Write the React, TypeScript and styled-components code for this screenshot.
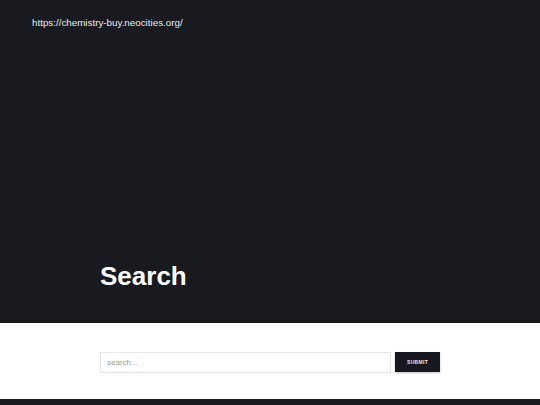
import React from 'react'
import styled, { createGlobalStyle } from 'styled-components'

const GlobalStyle = createGlobalStyle`
  html, body {
    margin: 0;
    padding: 0;
    background: #ffffff;
    font-family: 'Liberation Sans', Arial, sans-serif;
  }
`

const Hero = styled.header`
  height: 323px;
  background-color: #191920;
  display: flex;
  flex-direction: column;
  justify-content: space-between;
  box-sizing: border-box;
  padding: 17px 0 32px;
`

const SiteUrl = styled.div`
  padding-left: 32px;
  color: #ececec;
  font-size: 9.8px;
  line-height: 12px;
`

const Container = styled.div`
  width: 340px;
  margin: 0 auto;
`

const Title = styled.h1`
  margin: 0;
  color: #ffffff;
  font-size: 26px;
  font-weight: 700;
  line-height: 30px;
`

const SearchSection = styled.section`
  height: 76px;
  box-sizing: border-box;
  padding-top: 29px;
  background: #ffffff;
`

const SearchForm = styled.form`
  display: flex;
  gap: 4px;
  margin: 0;
`

const SearchInput = styled.input`
  flex: 1;
  height: 21px;
  box-sizing: border-box;
  border: 1px solid #e6e6e6;
  padding: 0 6px;
  font-family: 'Liberation Sans', Arial, sans-serif;
  font-size: 8px;
  color: #333;
  outline: none;
  &::placeholder {
    color: #9a9a9a;
  }
`

const SubmitButton = styled.button`
  width: 45px;
  height: 20px;
  border: none;
  background: #17171f;
  color: #e8e8e8;
  font-family: 'Liberation Sans', Arial, sans-serif;
  font-size: 5px;
  font-weight: 700;
  letter-spacing: 0.3px;
  text-transform: uppercase;
  box-shadow: 0 1px 2px rgba(0, 0, 0, 0.25);
  cursor: pointer;
`

const Footer = styled.footer`
  height: 6px;
  background-color: #191920;
`

const App = () => {
  return (
    <>
      <GlobalStyle />
      <Hero>
        <SiteUrl>https://chemistry-buy.neocities.org/</SiteUrl>
        <Container>
          <Title>Search</Title>
        </Container>
      </Hero>
      <SearchSection>
        <Container>
          <SearchForm onSubmit={(e) => e.preventDefault()}>
            <SearchInput type="search" placeholder="search..." />
            <SubmitButton type="submit">Submit</SubmitButton>
          </SearchForm>
        </Container>
      </SearchSection>
      <Footer />
    </>
  )
}

export default App
